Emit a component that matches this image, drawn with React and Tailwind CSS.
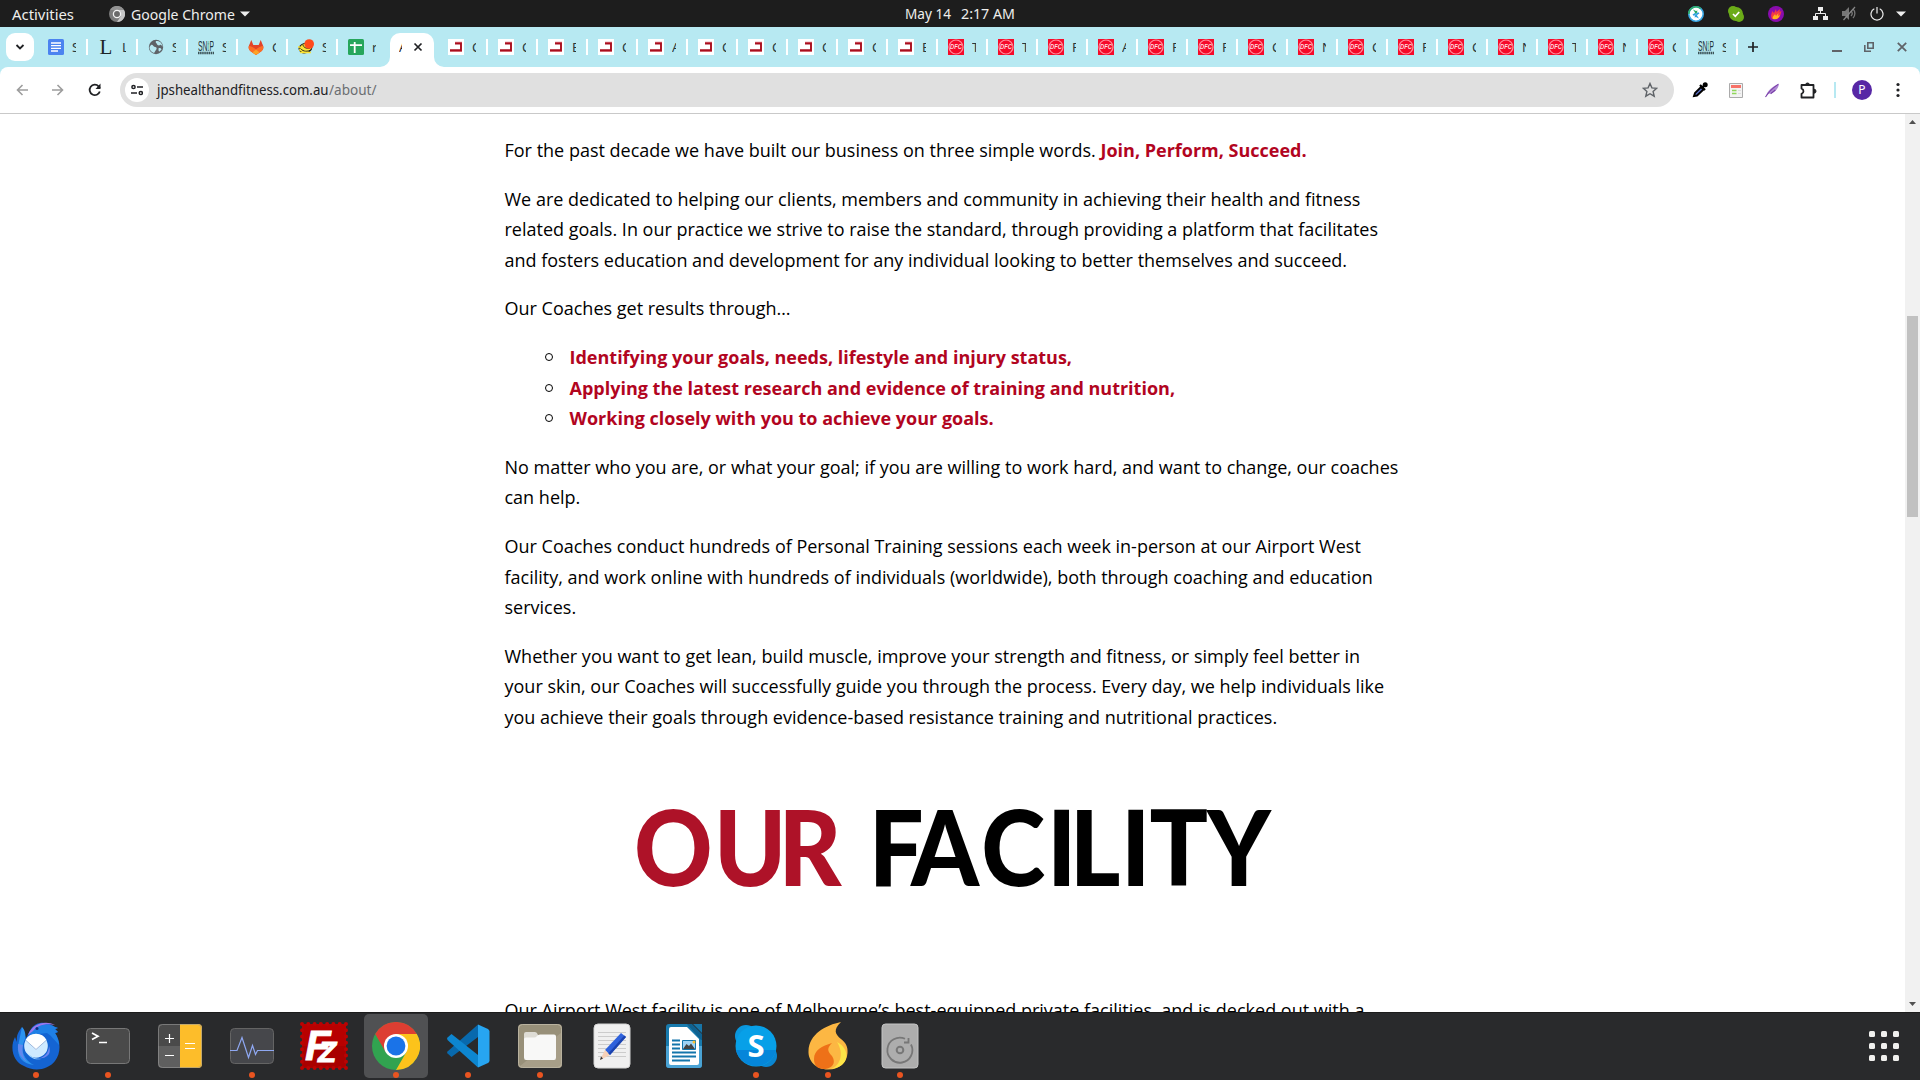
const jps = 'CCECACCCCE'.split('').map((t) => ['jps', t]);
const dfc = 'TTFAFFCNCFCNTNC'.split('').map((t) => ['dfc', t]);
const tabs = [['docs','S'],['ell','L'],['globe','S'],['snp','S'],['gitlab','G'],['bee','S'],['sheets','r'],['active','A'],...jps,...dfc,['snp','S']];

function Favicon({ kind }) {
  const p = { width: 16, height: 16, viewBox: '0 0 16 16', className: 'block shrink-0' };
  if (kind === 'docs') return <svg {...p}><rect width="16" height="16" rx="1.5" fill="#4b83f0" /><path d="M3 4h10M3 6.700h10M3 9.300h10M3 12h7" stroke="#fff" strokeWidth="1.300" /></svg>;
  if (kind === 'ell') return <span className="block h-4 w-4 shrink-0 text-center font-['Liberation_Serif'] text-[21px] leading-[17px] text-[#1c2426]">L</span>;
  if (kind === 'globe') return <svg {...p}><circle cx="8" cy="8" r="7.200" fill="#5f6368" /><path d="M3 6c2-1 2 2 4 2s2 2 1 3-1 2-2 3c-3-1-4.500-3-4.500-6M8 2c-1 2 1 2 1 3s2 2 3 1 2 1 2.500 2c0-3-2-5.500-5-6M10.500 9.500c1-1 3 0 3 1l-2 2c-1 0-1-1-1-3" fill="#b7e9f2" /></svg>;
  if (kind === 'snp') return <svg {...p}><text x="0" y="11.500" textLength="16" lengthAdjust="spacingAndGlyphs" fontFamily="Liberation Sans" fontSize="15.500" fill="#1e3238">SN:P</text><path d="M10.200 2v8" stroke="#6fc3b0" strokeWidth="1" /><path d="M0 14h16" stroke="#3c5358" strokeWidth="2.500" strokeDasharray="1.500 .6" /></svg>;
  if (kind === 'gitlab') return <svg {...p}><path d="M3.300 1 1 6.500c-.9 2-.2 4.400 1.600 5.700L8 16l5.400-3.800c1.800-1.300 2.500-3.700 1.600-5.700L12.700 1l-2 5H5.300z" fill="#e24329" /><path d="M.9 7C3 7 5.500 8.500 8 10.500 10.500 8.500 13 7 15.100 7c.7 2 0 4-1.700 5.200L8 16l-5.400-3.800C.9 11 .2 9 .9 7" fill="#fc6d26" /><path d="m4.500 13.500 3.500-3 3.500 3L8 16z" fill="#fca326" /></svg>;
  if (kind === 'bee') return <svg {...p} overflow="visible"><ellipse cx="7.500" cy="9" rx="6.500" ry="4.800" fill="#fbe334" stroke="#222" strokeWidth="1" transform="rotate(-15 7.500 9)" /><path d="M2.500 9.500c3 3.500 7 3.500 11 1M5 5.500c0 3 4 4.500 7 3.500" stroke="#222" strokeWidth="1" fill="none" /><path d="M0 8h2M1 11h2M2 13.500h11" stroke="#fbe334" strokeWidth="1.500" /><circle cx="11.200" cy="5" r="4.800" fill="#ff4a1c" /></svg>;
  if (kind === 'sheets') return <svg {...p}><rect width="16" height="16" rx="1.500" fill="#26a65b" /><path d="M2 6.200h12M6.700 3v11" stroke="#fff" strokeWidth="1.800" /></svg>;
  if (kind === 'jps') return <svg {...p}><path fill="#fff" d="M0 0h16v16H0z" /><path d="M7 3.800h7M2 12h12" stroke="#dc8188" strokeWidth="2" /><path d="M7 4.500h6v6.700H2" fill="none" stroke="#a90d1d" strokeWidth="1.900" /></svg>;
  return <svg {...p}><path fill="#f60a29" d="M0 0h16v16H0z" /><circle cx="8" cy="8" r="7" fill="none" stroke="#ff8c9c" strokeWidth="1.200" /><text x="2" y="10.300" textLength="12" lengthAdjust="spacingAndGlyphs" fontFamily="Liberation Sans" fontWeight="bold" fontStyle="italic" fontSize="6.500" fill="#ffd9de">DFC</text></svg>;
}

function Tab({ kind, title, sep }) {
  if (kind === 'active')
    return (
      <div className="flex h-10 w-[50px] items-end">
        <div className="relative flex h-[34px] w-11 items-center rounded-t-[10px] bg-white pb-[6px]">
          <span className="ml-[9px] w-[3px] overflow-hidden font-['Noto_Sans'] text-[13px] leading-4 text-[#202124]">A</span>
          <svg className="ml-[11px]" width="10" height="10" viewBox="0 0 10 10"><path d="m1.500 1.500 7 7m0-7-7 7" stroke="#202124" strokeWidth="1.700" /></svg>
          <svg className="absolute bottom-0 -left-[10px]" width="10" height="10"><path d="M10 0v10H0A10 10 0 0 0 10 0" fill="#fff" /></svg>
          <svg className="absolute -right-[10px] bottom-0" width="10" height="10"><path d="M0 0v10h10A10 10 0 0 1 0 0" fill="#fff" /></svg>
        </div>
      </div>
    );
  return (
    <div className="flex h-10 w-[50px] items-center pl-2">
      <Favicon kind={kind} />
      <span className="ml-2 w-1 overflow-hidden font-['Noto_Sans'] text-[13px] leading-4 text-[#28373b]">{title}</span>
      {sep && <span className="ml-[10px] h-4 w-[2px] bg-white" />}
    </div>
  );
}

function TopBar() {
  return (
    <div className="flex h-[27px] shrink-0 items-center bg-[#1d1d1d] font-['Noto_Sans'] text-[14px] text-[#eeeeec]">
      <div className="flex w-[600px] items-center pl-3">
        <span className="w-[97px]"><Fit w={62}>Activities</Fit></span>
        <svg width="16" height="16" viewBox="0 0 16 16"><circle cx="8" cy="8" r="8" fill="#7b7b7b" /><path d="M8 4h7a8 8 0 0 1-7 12l4-6z" fill="#c6c6c6" /><path d="M1 4a8 8 0 0 1 14 0H8z" fill="#929292" /><circle cx="8" cy="8" r="3.600" fill="#6a6a6a" stroke="#f3f3f3" strokeWidth="1.300" /></svg>
        <span className="ml-[6px]"><Fit w={104}>Google Chrome</Fit></span>
        <svg className="ml-[5px]" width="10" height="6"><path d="M0 .5h10L5 5.500z" fill="#eee" /></svg>
      </div>
      <div className="flex flex-1 pl-[305px]">
        <Fit w={46}>May 14</Fit><span className="w-[10px]" /><Fit w={54}>2:17 AM</Fit>
      </div>
      <div className="flex items-center pr-[14px]">
        <svg width="16" height="16" viewBox="0 0 16 16"><circle cx="8" cy="8" r="7.200" fill="#fff" stroke="#38a7e6" strokeWidth="1.600" /><path d="M.8 8a7.200 7.200 0 0 1 12-5.300" fill="none" stroke="#2fae6a" strokeWidth="1.600" /><path d="M5 3.500 8 5l1.500-.5L8.500 8 6.500 7.500 7 6.500z" fill="#22a862" /><path d="m11 12.500-3-1.500-1.500.5L7.500 8l2 .5-.5 1z" fill="#2c9fe0" /><path d="M4.500 8.500 7 7l1 1-2 2zM11.500 7.500 9 9 8 8l2-2z" fill="#2c9fe0" /></svg>
        <svg className="ml-6" width="16" height="16" viewBox="0 0 16 16"><circle cx="5" cy="5" r="5" fill="#6bac18" /><circle cx="11" cy="11" r="5" fill="#6bac18" /><circle cx="8" cy="8" r="7" fill="#6bac18" /><path d="m5 8 2.300 2.300L11.200 6" fill="none" stroke="#fff" strokeWidth="1.700" /></svg>
        <svg className="ml-6" width="16" height="16" viewBox="0 0 16 16"><circle cx="8" cy="8" r="8" fill="#8a0cae" /><path d="M4 13C2 9 4 8 4 5l2 2 2-4 .5 3L12 3l-.5 3 2-1c-1 3-1 7-5 8z" fill="#f33a46" /><path d="M5 13c-1-3 1-3 2-5l1 2 2.500-3-.5 3 2-1c-1 3-3 5-7 4" fill="#ffb51d" /></svg>
        <svg className="ml-[29px]" width="15" height="14" viewBox="0 0 15 14"><path d="M5 0h5v4H5zM0 9h5v4H0zM10 9h5v4h-5z" fill="#eee" /><path d="M7.500 4v3M2.500 9V6.500h10V9" fill="none" stroke="#eee" /></svg>
        <svg className="ml-[14px]" width="15" height="15" viewBox="0 0 15 15"><path d="M0 5h3l4-4v13l-4-4H0z" fill="#777" /><path d="M9 5c1.500 1.500 1.500 3.500 0 5M11 3c2.500 2.500 2.500 6.500 0 9" fill="none" stroke="#777" strokeWidth="1.300" /><path d="M1.500 14 13 1" stroke="#888" strokeWidth="1.200" /></svg>
        <svg className="ml-[13px]" width="14" height="14" viewBox="0 0 14 14"><path d="M4.300 1.800a6 6 0 1 0 5.400 0M7 0v6.500" fill="none" stroke="#eee" strokeWidth="1.200" /></svg>
        <svg className="ml-[12px]" width="10" height="6"><path d="M0 .5h10L5 5.500z" fill="#eee" /></svg>
      </div>
    </div>
  );
}

function Fit({ w, children, fill = 'currentColor', size = 14 }) {
  return (
    <svg className="inline-block align-middle" width={w} height="20" overflow="visible">
      <text x="0" y="15" textLength={w} lengthAdjust="spacingAndGlyphs" fontSize={size} fill={fill}>{children}</text>
    </svg>
  );
}

function TabStrip() {
  return (
    <div className="flex h-10 shrink-0 items-center bg-[#b7e9f2]">
      <div className="ml-[6px] flex h-7 w-7 items-center justify-center rounded-[9px] bg-white">
        <svg width="10" height="6" viewBox="0 0 10 6"><path d="m1.500 1 3.500 3.500L8.500 1" fill="none" stroke="#202124" strokeWidth="1.800" /></svg>
      </div>
      <div className="ml-[6px] flex">
        {tabs.map(([k, t], i) => <Tab key={i} kind={k} title={t} sep={i !== 6} />)}
      </div>
      <svg className="ml-[7px]" width="12" height="12"><path d="M6 1v10M1 6h10" stroke="#202124" strokeWidth="1.700" /></svg>
      <div className="ml-auto flex items-center pr-[13px]">
        <svg width="10" height="12"><path d="M0 10h10" stroke="#5f6368" strokeWidth="2" /></svg>
        <svg className="ml-[22px]" width="10" height="10"><path d="M3.800.8h5.400v5.400H3.800zM.8 3v6.200H7" fill="none" stroke="#5f6368" strokeWidth="1.600" /></svg>
        <svg className="ml-[23px]" width="10" height="10"><path d="m.8.8 8.400 8.400m0-8.400L.8 9.200" stroke="#5f6368" strokeWidth="1.800" /></svg>
      </div>
    </div>
  );
}

function Toolbar() {
  return (
    <div className="shrink-0 bg-[#b7e9f2]">
      <div className="flex h-[47px] items-center rounded-t-lg border-b border-[#c9c9c9] bg-white font-['Noto_Sans']">
        <svg className="ml-4" width="12" height="12"><path d="M12 6H1.500M6.500 1l-5 5 5 5" fill="none" stroke="#9d9d9d" strokeWidth="1.600" /></svg>
        <svg className="ml-6" width="12" height="12"><path d="M0 6h10.500M5.500 1l5 5-5 5" fill="none" stroke="#9d9d9d" strokeWidth="1.600" /></svg>
        <svg className="ml-[24px]" width="14" height="14"><path d="M11.800 8.500A5.200 5.200 0 1 1 10.600 3.300L12 5" fill="none" stroke="#202124" strokeWidth="1.800" /><path d="M12.500.5V6H7.500z" fill="#202124" /></svg>
        <div className="ml-[18px] flex h-[34px] w-[1554px] items-center rounded-full bg-[#e0e0e0] pl-[5px]">
          <div className="flex h-6 w-6 items-center justify-center rounded-full bg-white">
            <svg width="12" height="12"><path d="M6 3h6M0 9h6" stroke="#202124" strokeWidth="1.600" /><circle cx="2.500" cy="3" r="1.600" fill="none" stroke="#202124" strokeWidth="1.500" /><circle cx="9.800" cy="9" r="1.600" fill="none" stroke="#202124" strokeWidth="1.500" /></svg>
          </div>
          <span className="ml-2 flex"><Fit w={171.5} fill="#202124">jpshealthandfitness.com.au</Fit><Fit w={47.500} fill="#6b6e72">/about/</Fit></span>
          <svg className="mr-4 ml-auto" width="16" height="16" viewBox="0 0 16 16"><path d="m8 1.500 1.900 4.400 4.800.4-3.600 3.200 1.100 4.700L8 11.700l-4.200 2.500 1.100-4.700L1.300 6.300l4.800-.4z" fill="none" stroke="#5f6368" strokeWidth="1.400" /></svg>
        </div>
        <svg className="ml-[18px]" width="16" height="16" viewBox="0 0 16 16"><path d="m2 14 1-3 6-6 2.500 2.500-6.500 6z" fill="#5a6fc8" stroke="#000" strokeWidth="1.900" /><path d="m8 3 5 5M10.500 5.500l2.500-3" stroke="#000" strokeWidth="2.200" /><circle cx="13.200" cy="2.800" r="2.500" /></svg>
        <svg className="ml-[21px]" width="14" height="15" viewBox="0 0 14 15"><path d="M.5.500h13v14H.5z" fill="#f3f3f3" stroke="#aaa" /><path d="M2 2h10v3H2z" fill="#f77268" /><path d="M3 7.500h4.500M3 10.500h4.500" stroke="#8fd65a" strokeWidth="1.300" /><path d="M9 7.500h3M9 10.500h3" stroke="#ddd" /></svg>
        <svg className="ml-[22px]" width="15" height="16" viewBox="0 0 16 16"><path d="M1 15C2 9 8 4 15 1c-.5 6-6 11-11 11z" fill="#b08ad4" /><path d="M.5 15.500C4 10 8 6 14 2M6 12l5-4" stroke="#7a40a8" fill="none" strokeWidth="1.200" /></svg>
        <svg className="ml-5" width="17" height="17" viewBox="0 0 17 17"><path d="M1.500 3h12v12.500h-12v-3.700a2.700 2.700 0 0 0 0-5.200z" fill="none" stroke="#202124" strokeWidth="1.800" strokeLinejoin="round" /><path d="M5.500 3a2 2 0 0 1 4 0M14 7.200a2 2 0 0 1 0 4" fill="#202124" stroke="#202124" /></svg>
        <span className="ml-[17px] h-4 w-[2px] bg-[#b7e9f2]" />
        <span className="ml-4 flex h-5 w-5 items-center justify-center rounded-full bg-[#5727a5] text-[12px] leading-none text-white">P</span>
        <svg className="ml-[24px]" width="4" height="16"><circle cx="2" cy="2.500" r="1.600" fill="#202124" /><circle cx="2" cy="8" r="1.600" fill="#202124" /><circle cx="2" cy="13.500" r="1.600" fill="#202124" /></svg>
      </div>
    </div>
  );
}

function Bullet({ children }) {
  return (
    <li className="flex items-center">
      <span className="mr-[17px] h-2 w-2 rounded-full border border-black" />
      {children}
    </li>
  );
}

// Letters are kerned one by one; the group is condensed to 92% of the font's width.
const kern = (xs) => xs.map((x) => x / 0.92).join(' ');

function Page() {
  return (
    <div className="flex min-h-0 flex-1 overflow-hidden bg-white">
      <main className="flex-1 overflow-hidden pt-[21px] pl-[504.500px] font-['Open_Sans'] text-[18px] leading-[30.600px] text-black">
        <div className="flex w-[900px] flex-col gap-[18px] whitespace-nowrap">
          <p>For the past decade we have built our business on three simple words. <strong className="text-[#b2051f]">Join, Perform, Succeed.</strong></p>
          <p>We are dedicated to helping our clients, members and community in achieving their health and fitness<br />related goals. In our practice we strive to raise the standard, through providing a platform that facilitates<br />and fosters education and development for any individual looking to better themselves and succeed.</p>
          <p>Our Coaches get results through…</p>
          <ul className="pl-[40px] font-bold text-[#b2051f]">
            <Bullet>Identifying your goals, needs, lifestyle and injury status,</Bullet>
            <Bullet>Applying the latest research and evidence of training and nutrition,</Bullet>
            <Bullet>Working closely with you to achieve your goals.</Bullet>
          </ul>
          <p>No matter who you are, or what your goal; if you are willing to work hard, and want to change, our coaches<br />can help.</p>
          <p>Our Coaches conduct hundreds of Personal Training sessions each week in-person at our Airport West<br />facility, and work online with hundreds of individuals (worldwide), both through coaching and education<br />services.</p>
          <p>Whether you want to get lean, build muscle, improve your strength and fitness, or simply feel better in<br />your skin, our Coaches will successfully guide you through the process. Every day, we help individuals like<br />you achieve their goals through evidence-based resistance training and nutritional practices.</p>
        </div>
        <h2 className="mt-[61px] ml-[119.500px] h-[116px]">
          <svg width="680" height="116" viewBox="624 794 680 116" fontFamily="Lato" fontWeight="900" fontSize="105.500">
            <g transform="scale(.92 1)">
              <text y="886" x={kern([634, 714, 778.6])} fill="#ae1228">OUR</text>
              <text y="886" x={kern([868.7, 911, 981.3, 1047, 1069.7, 1121, 1149.500, 1207])}>FACILITY</text>
            </g>
          </svg>
        </h2>
        <p className="mt-[85.500px] whitespace-nowrap">Our Airport West facility is one of Melbourne’s best-equipped private facilities, and is decked out with a</p>
      </main>
      <div className="flex w-[15px] flex-col items-center bg-[#f1f1f1]">
        <svg className="mt-[6px]" width="7" height="4"><path d="M0 4h7L3.500 0z" fill="#505050" /></svg>
        <div className="mt-[192px] h-[201px] w-[11px] bg-[#c1c1c1]" />
        <svg className="mt-auto mb-[6px]" width="7" height="4"><path d="M0 0h7L3.500 4z" fill="#505050" /></svg>
      </div>
    </div>
  );
}

const icons = {
  thunderbird: <><path d="M3 15C-3 27 2 40 12 44c10 6 24 4 31-5 6-8 6-20 0-28l3-1-3-3 3-1-3-1C35-1 24-1 19 7L14 16 10 5C7 9 4 13 5 20z" fill="#1464d2" /><path d="M17 13C23 2 36 0 43 5l3 1-3 1 3 3-3 1c2 3 4 8 4 12-4-4-7-9-12-12z" fill="#1f80e6" /><path d="M16 13C20 2 33-2 43 3c-10-2-18 1-22 6z" fill="#9a78ee" /><path d="M10 5c3 3 4 8 3 12-4 8-4 19 9 26C10 42 5 34 6 24z" fill="#2b93ef" /><path d="M6 22c-1 9 4 15 9 18-5-6-5-12-4-17z" fill="#7b83ee" opacity=".7" /><path d="M37 24c0 7-5 12-12 13 6-1 9-1 12-5 1-2 1-5 0-8" fill="#6f86ef" /><circle cx="25" cy="6.500" r="1.500" fill="#112c7a" /><circle cx="24" cy="24" r="11.800" fill="#cfeaff" /><path d="M18 33c3 3 7 4 11 4-6 1-11-1-13-5z" fill="#a6d8ff" /><path d="m13.500 18 10.500 10L34.500 18a12 12 0 0 0-21 0" fill="#fff" /><path d="m14 18.500 10 9 10-9" fill="none" stroke="#9fb9de" /></>,
  terminal: <><rect x="2.500" y="6.500" width="43" height="35" rx="4" fill="#4a4a4a" stroke="#777" /><path d="m8 11 6 3.200L8 17.500M15 20.500h8" fill="none" stroke="#fff" strokeWidth="1.700" /></>,
  calc: <><rect x="2" y="2" width="44" height="44" rx="4" fill="#5f5f5f" /><path d="M2 6a4 4 0 0 1 4-4h18v22H2z" fill="#4a4a4a" /><path d="M24 2h18a4 4 0 0 1 4 4v36a4 4 0 0 1-4 4H24z" fill="#fdbd2a" /><rect x="2.500" y="2.500" width="43" height="43" rx="4" fill="none" stroke="#999" strokeOpacity=".6" /><path d="M9 16.500h9M13.500 12v9M9 33.500h9M29 21.500h10M29 26.500h10" stroke="#fff" strokeWidth="1.200" /></>,
  monitor: <><rect x="2.500" y="6.500" width="43" height="35" rx="4" fill="#46474b" stroke="#646464" /><path d="M2 28.500h7l5-13 6.500 20 4-12 3 9 2-4H46" fill="none" stroke="#8fa8f2" strokeWidth="1.200" /></>,
  filezilla: <><path d="M2 2h44v44H2z" fill="#a90000" /><path d="M2 2h44v22H2z" fill="#b80000" /><path d="M2 2h44v44H2z" fill="none" stroke="#bb0303" strokeWidth="4" strokeDasharray="0 6.285" strokeLinecap="round" /><text x="5" y="38" fontFamily="Liberation Sans" fontWeight="bold" fontStyle="italic" fontSize="42" fill="#fff" stroke="#fff" strokeWidth=".8">F</text><text x="18" y="40" fontFamily="Liberation Sans" fontWeight="bold" fontStyle="italic" fontSize="30" fill="#fff" stroke="#fff" strokeWidth=".8">Z</text></>,
  chrome: <><circle cx="24" cy="24" r="24" fill="#31a350" /><path d="M3.200 12A24 24 0 0 1 44.800 12H24L13.600 30z" fill="#dd3e32" /><path d="M44.800 12A24 24 0 0 1 24 48l10.400-18L24 12z" fill="#fcc31b" /><circle cx="24" cy="24" r="12" fill="#fff" /><circle cx="24" cy="24" r="9.400" fill="#1a73e8" /></>,
  vscode: <><path d="m3 31 4.500 4L34 15V2.500L3.500 29.500z" fill="#0869ad" /><path d="m3 16 4.500-4L34 33v12.500L3.500 18z" fill="#0d86d0" /><path d="m34 2.500 10 4.500q1.500 1 1.500 2.500v29q0 1.500-1.500 2.500L34 45.500z" fill="#27a5f1" /></>,
  files: <><rect x="2" y="2" width="44" height="44" rx="4" fill="#989079" /><path d="m4 44 42-34v32a4 4 0 0 1-4 4H6z" fill="#a79e88" /><rect x="2.500" y="2.500" width="43" height="43" rx="4" fill="none" stroke="#b9b29f" /><path d="M8 18V12q0-2 2-2h9q2 0 3 3v5z" fill="#dedcd5" /><path d="M8 17q0-1.500 2-1.500h8q2 0 3-1.500t3-1.500h14q2 0 2 2v21q0 2.500-2 2.500H10q-2 0-2-2.500z" fill="#f8f8f7" /></>,
  editor: <><rect x="6" y="2" width="36" height="44" rx="4" fill="#f0f0f0" stroke="#d5d5d5" /><path d="M10 10.500h28M10 14.500h28M10 18.500h28M10 22.500h28M10 26.500h28M10 30.500h28M10 34.500h28" stroke="#ccc" /><path d="m17 28 16-17 5 4-16 18z" fill="#2f62dc" /><path d="m17 28 5 5-10 5z" fill="#f6d1b8" /><path d="m12 38 3-1.500-2-2z" fill="#333" /><path d="m22 33 16-18-1.700-1.500-16 18z" fill="#1b43ae" /></>,
  writer: <><rect x="6" y="2" width="36" height="44" rx="3" fill="#187aad" /><path d="M6 24h36v19a3 3 0 0 1-3 3H9a3 3 0 0 1-3-3z" fill="#4aa3d5" /><path d="M9 7q0-2 2-2h16l12 12v24q0 2-2 2H11q-2 0-2-2z" fill="#fff" /><path d="M28 2h14v16z" fill="#292a2c" /><path d="M27 2h5l10 10v6h-1z" fill="#0f6190" /><path d="M33 2h9v9z" fill="#1775a8" /><path d="M12 18.500h8M12 22.500h8M12 26.500h8M12 30.500h24M12 34.500h24M12 38.500h18" stroke="#1375ab" strokeWidth="1.800" /><path d="M22.500 18.500h13v9h-13z" fill="#9fd3f5" stroke="#1375ab" /><path d="m23 27 3.500-5 2.500 2 2-2.500 4 5.500z" fill="#444" /><circle cx="34" cy="20" r="1.500" fill="#fbc02d" /></>,
  skype: <><circle cx="14" cy="14" r="11" fill="#0a97de" /><circle cx="34" cy="34" r="11" fill="#0a86d2" /><circle cx="24" cy="24" r="20.500" fill="#07a0e8" /><path d="M4 28a20.500 20.500 0 0 0 40 0" fill="#0586da" /><text x="24" y="35" textAnchor="middle" fontFamily="Open Sans" fontWeight="700" fontSize="31" fill="#fff">S</text></>,
  flame: <><path d="M37 0C29 8 31 12 37 17c5 4 7 8 6.500 14C43 40 36 47.500 24 47.500S4 39 4.500 29C5 12 22 3 37 0" fill="#fcb743" /><path d="M27 47c10-4 13-16 6-27 14 7 13 25-6 27" fill="#fde547" /><path d="M28 21c-5 5-5 8 0 13 5 8-1 13-8 13S10 43 10 37c0-9 8-13 18-16" fill="#ee7118" /></>,
  disk: <><rect x="6" y="2" width="36" height="44" rx="3.500" fill="#adadad" stroke="#c5c5c5" /><path d="M35 22.500A12.500 12.500 0 1 1 29 16.800M28 20.500h4.500V16" fill="none" stroke="#777" strokeWidth="1.800" /><circle cx="24" cy="28" r="3.300" fill="none" stroke="#777" strokeWidth="2" /></>,
};
const apps = [['thunderbird',1],['terminal',1],['calc',0],['monitor',1],['filezilla',0],['chrome',1],['vscode',1],['files',1],['editor',0],['writer',0],['skype',1],['flame',1],['disk',1]];

function Dock() {
  return (
    <div className="flex h-[68px] shrink-0 items-start border-t border-[#1c1c1c] bg-[#292a2c] pt-px">
      {apps.map(([name, running]) => (
        <div key={name} className={name === 'chrome' ? 'mr-2 flex h-16 w-16 flex-col items-center rounded-[5px] bg-[#505153] pt-2' : 'mr-2 flex h-16 w-16 flex-col items-center pt-2 first:ml-1'}>
          <svg className="shrink-0" width="48" height="48" viewBox="0 0 48 48">{icons[name]}</svg>
          {running ? <span className="mt-[2px] h-[6px] w-[6px] rounded-full bg-[#e95420]" /> : null}
        </div>
      ))}
      <div className="mt-[17px] mr-[21px] ml-auto grid grid-cols-3 gap-[6px]">
        {Array.from({ length: 9 }, (_, i) => <span key={i} className="h-[6px] w-[6px] rounded-[1.500px] bg-[#f0f0ee]" />)}
      </div>
    </div>
  );
}

export default function App() {
  return (
    <div className="flex h-[1080px] w-[1920px] flex-col overflow-hidden bg-white">
      <TopBar />
      <TabStrip />
      <Toolbar />
      <Page />
      <Dock />
    </div>
  );
}
